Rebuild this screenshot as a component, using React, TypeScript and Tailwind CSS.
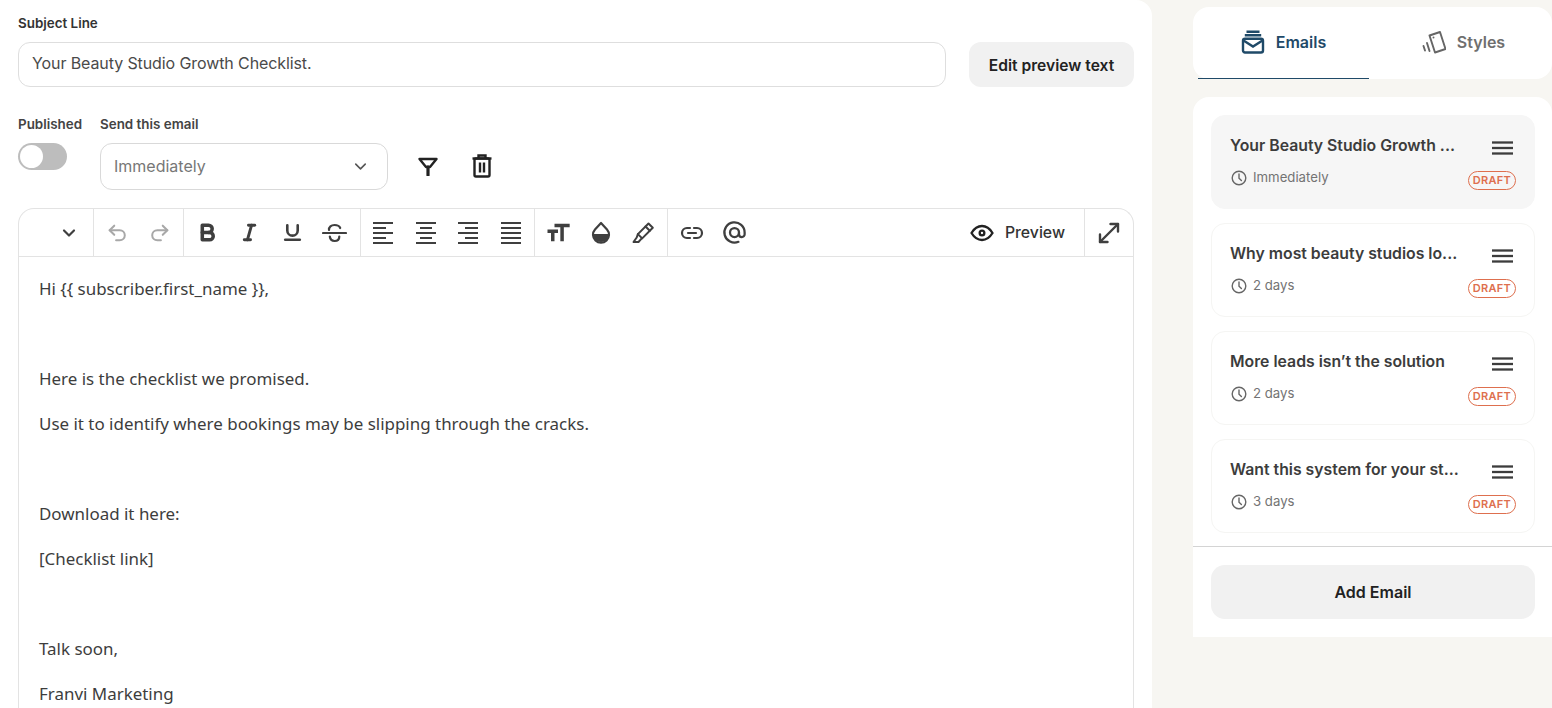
import { ChevronDown } from 'lucide-react'
import { TbAt, TbBold, TbEye, TbItalic, TbUnderline } from 'react-icons/tb'
import { MdFormatSize } from 'react-icons/md'

const inter = 'font-["Inter",sans-serif]'

function Lines({ rows }: { rows: [number, number][] }) {
  return (
    <svg width="22" height="22" viewBox="0 0 22 22" stroke="#3f3f3f" strokeWidth="2">
      {rows.map(([a, b], i) => (
        <line key={i} x1={a} x2={b} y1={1 + i * 5} y2={1 + i * 5} />
      ))}
    </svg>
  )
}

function ToolBtn({ children }: { children: React.ReactNode }) {
  return <div className="w-[42.5px] h-full flex items-center justify-center text-[#3f3f3f]">{children}</div>
}

function Group({ children, className = '' }: { children: React.ReactNode; className?: string }) {
  return <div className={`h-full flex items-center justify-center border-r border-[#e3e3e3] ${className}`}>{children}</div>
}

function Toolbar() {
  return (
    <div className="h-12 flex items-center border-b border-[#e3e3e3]">
      <Group className="w-[75px] pr-[2px]">
        <ChevronDown size={20} strokeWidth={2.6} className="ml-[27px] text-[#3f3f3f]" />
      </Group>
      <Group className="w-[90px]">
        <ToolBtn>
          <svg width="22" height="22" viewBox="0 0 24 24" fill="none" stroke="#a8a8a8" strokeWidth="2.200" strokeLinecap="round" strokeLinejoin="round">
            <path d="M9 14 4 9l5-5" />
            <path d="M4 9h11a5.5 5.5 0 0 1 0 11h-4" />
          </svg>
        </ToolBtn>
        <ToolBtn>
          <svg width="22" height="22" viewBox="0 0 24 24" fill="none" stroke="#a8a8a8" strokeWidth="2.200" strokeLinecap="round" strokeLinejoin="round">
            <path d="m15 14 5-5-5-5" />
            <path d="M20 9H9a5.5 5.5 0 0 0 0 11h4" />
          </svg>
        </ToolBtn>
      </Group>
      <Group className="w-[177px] pr-[2px]">
        <ToolBtn><TbBold size={25} strokeWidth={3.4} /></ToolBtn>
        <ToolBtn><TbItalic size={25} strokeWidth={2.8} /></ToolBtn>
        <ToolBtn><TbUnderline size={25} strokeWidth={2.5} /></ToolBtn>
        <ToolBtn>
          <svg width="25" height="24" viewBox="0 0 25 24" fill="none" stroke="#3f3f3f" strokeWidth="2.200" strokeLinecap="round">
            <path d="M1 12h23" />
            <path d="M7 9c-.2-3.200 2.200-5 5.500-5s5 1.200 5.700 3" />
            <path d="M7.800 15.500c.4 3 2.200 4.500 4.800 4.500s4.700-1.500 4.700-4.500" />
          </svg>
        </ToolBtn>
      </Group>
      <Group className="w-[174px] pr-[1px]">
        <ToolBtn><Lines rows={[[1, 21], [1, 14], [1, 21], [1, 14], [1, 21]]} /></ToolBtn>
        <ToolBtn><Lines rows={[[1, 21], [5, 17], [1, 21], [5, 17], [1, 21]]} /></ToolBtn>
        <ToolBtn><Lines rows={[[1, 21], [8, 21], [1, 21], [8, 21], [1, 21]]} /></ToolBtn>
        <ToolBtn><Lines rows={[[1, 21], [1, 21], [1, 21], [1, 21], [1, 21]]} /></ToolBtn>
      </Group>
      <Group className="w-[133px] pr-[1px]">
        <ToolBtn><MdFormatSize size={28} /></ToolBtn>
        <ToolBtn>
          <svg width="22" height="24" viewBox="0 0 22 24" fill="none">
            <path d="M11 2 5 8.400a8 8 0 1 0 12 0Z" stroke="#3f3f3f" strokeWidth="2.200" strokeLinejoin="round" />
            <path d="M3 13h16a8 8 0 0 1-16 0Z" fill="#3f3f3f" />
          </svg>
        </ToolBtn>
        <ToolBtn>
          <svg width="24" height="24" viewBox="0 0 24 24" fill="none" stroke="#3f3f3f" strokeWidth="2" strokeLinejoin="round" strokeLinecap="round">
            <path d="m17.500 2.500 4.300 4.300-10.600 10.600-4.300-4.300Z" />
            <path d="m14.500 5.500 4.300 4.300" />
            <path d="m6.900 13.100-1.200 3.400-3.200 4.500h5l3-3.300" />
          </svg>
        </ToolBtn>
      </Group>
      <div className="h-full flex items-center pl-[3px]">
        <ToolBtn>
          <svg width="24" height="24" viewBox="0 0 24 24" fill="none" stroke="#3f3f3f" strokeWidth="2.200" strokeLinecap="round">
            <path d="M10 7H7a5 5 0 0 0 0 10h3" />
            <path d="M14 7h3a5 5 0 0 1 0 10h-3" />
            <path d="M8 12h8" />
          </svg>
        </ToolBtn>
        <ToolBtn><TbAt size={27} strokeWidth={2} /></ToolBtn>
      </div>
      <div className="ml-auto h-full flex items-center gap-[9px] pr-[19px] border-r border-[#e3e3e3]">
        <TbEye size={28} strokeWidth={2} className="text-[#222]" />
        <span className={`${inter} text-[15.800px] font-medium text-[#333]`}>Preview</span>
      </div>
      <div className="w-[48px] h-full flex items-center justify-center text-[#3f3f3f]">
        <svg width="24" height="24" viewBox="0 0 24 24" fill="none" stroke="#3f3f3f" strokeWidth="2.400" strokeLinecap="round" strokeLinejoin="round">
          <path d="M3 21 21 3" />
          <path d="M13.500 3H21v7.500" />
          <path d="M3 13.500V21h7.500" />
        </svg>
      </div>
    </div>
  )
}

const bodyLines = [
  'Hi {{ subscriber.first_name }},',
  '',
  'Here is the checklist we promised.',
  'Use it to identify where bookings may be slipping through the cracks.',
  '',
  'Download it here:',
  '[Checklist link]',
  '',
  'Talk soon,',
  'Franvi Marketing',
]

function EmailCard({ title, time, active }: { title: string; time: string; active?: boolean }) {
  return (
    <div className={`h-[94px] rounded-[14px] border pl-[18px] pr-[18px] pt-[20px] ${active ? 'bg-[#f6f6f6] border-[#f6f6f6]' : 'bg-white border-[#f5f5f3]'}`}>
      <div className="flex items-start justify-between h-5">
        <span className={`${inter} text-[15.800px] leading-5 font-semibold text-[#3c3c3c] whitespace-nowrap`}>{title}</span>
        <svg width="21" height="14" viewBox="0 0 21 14" stroke="#3c3c3c" strokeWidth="2.300" className="mt-[5px] mr-[3px] shrink-0">
          <line x1="0" x2="21" y1="1.500" y2="1.500" />
          <line x1="0" x2="21" y1="7" y2="7" />
          <line x1="0" x2="21" y1="12.500" y2="12.500" />
        </svg>
      </div>
      <div className="flex items-center justify-between mt-[15px]">
        <div className="flex items-center gap-[6px] -mt-[5px] ml-px">
          <svg width="16" height="16" viewBox="0 0 16 16" fill="none" stroke="#666" strokeWidth="1.400" strokeLinecap="round">
            <circle cx="8" cy="8" r="6.800" />
            <path d="M8 4v4.200l2.400 2.400" />
          </svg>
          <span className={`${inter} text-[13.200px] text-[#737373]`}>{time}</span>
        </div>
        <span className={`${inter} h-[19px] w-[48px] flex items-center justify-center rounded-full border border-[#de6f4e] text-[11px] font-semibold tracking-[0.3px] text-[#de6f4e]`}>DRAFT</span>
      </div>
    </div>
  )
}

export default function App() {
  return (
    <div className="h-[708px] overflow-hidden bg-[#f7f6f2] flex">
      {/* Editor side */}
      <div className="w-[1152px] h-full overflow-hidden bg-white rounded-tr-2xl pl-[18px] pr-[18px] pt-[15px]">
        <label className={`${inter} block text-[13.400px] leading-4 font-semibold text-[#333]`}>Subject Line</label>
        <div className="flex gap-[23px] mt-[11px]">
          <div className={`${inter} w-[928px] h-[45px] flex items-center pl-[13px] pb-[3px] rounded-xl border border-[#dedede] text-[16px] tracking-[-0.1px] text-[#4a4a4a]`}>
            Your Beauty Studio Growth Checklist.
          </div>
          <button className={`${inter} flex-1 h-[45px] pt-[2px] rounded-xl bg-[#f1f1f1] text-[15.600px] font-semibold text-[#222]`}>
            Edit preview text
          </button>
        </div>

        <div className="flex mt-[29px] h-[92px]">
          <div className="w-[82px]">
            <div className={`${inter} text-[13.400px] leading-4 font-semibold text-[#444]`}>Published</div>
            <div className="mt-[11px] w-[49px] h-[27px] rounded-full bg-[#bdbdbd] p-[2px]">
              <div className="w-[23px] h-[23px] rounded-full bg-white" />
            </div>
          </div>
          <div>
            <div className={`${inter} text-[13.400px] leading-4 font-semibold text-[#444]`}>Send this email</div>
            <div className="flex items-center mt-[11px]">
              <div className={`${inter} w-[288px] h-[47px] pb-[1px] flex items-center justify-between pl-[13px] pr-[17px] rounded-xl border border-[#d9d9d9] text-[16px] text-[#777]`}>
                Immediately
                <ChevronDown size={19} strokeWidth={2} className="text-[#555]" />
              </div>
              <svg width="22" height="22" viewBox="0 0 22 22" fill="#222" stroke="#222" strokeWidth="2.400" strokeLinejoin="round" className="ml-[29px]">
                <path d="M2.500 3h17l-6.500 8-1 0-2 0-1 0Z" fill="none" />
                <path d="M10 10h2v9.500h-2Z" strokeWidth="1.200" />
              </svg>
              <svg width="22" height="24" viewBox="0 0 22 24" fill="none" stroke="#222" strokeWidth="2.400" className="ml-[32px] -mt-[1px]">
                <path d="M1.500 4.500h19" />
                <path d="M7.500 4V1.500h7V4" />
                <rect x="3.500" y="4.500" width="15" height="18" rx="1.500" />
                <path d="M9 8.500v10M13 8.500v10" />
              </svg>
            </div>
          </div>
        </div>

        <div className="rounded-t-2xl border border-[#e3e3e3] border-b-0 h-[600px]">
          <Toolbar />
          <div className={`font-["Noto_Sans",sans-serif] pl-5 pt-[9px] text-[16.950px] leading-[45px] text-[#3d3d3d]`}>
            {bodyLines.map((line, i) => (
              <div key={i} className="h-[45px]">{line}</div>
            ))}
          </div>
        </div>
      </div>

      {/* Sidebar */}
      <div className="ml-[41px] flex-1 pt-[7px]">
        <div className="h-[72px] bg-white rounded-2xl flex pl-[5px]">
          <div className="w-[171px] flex items-center justify-center gap-[11px] border-b border-[#1f4a68] pb-[2px]">
            <svg width="24" height="24" viewBox="0 0 24 24" fill="none" stroke="#1f4a68" strokeWidth="2.400">
              <path d="M5.500 1.800h13M3.800 5.200h16.400" />
              <rect x="2" y="8.700" width="20" height="13.800" rx="2" />
              <path d="m2.500 10.500 9.500 6 9.500-6" />
            </svg>
            <span className={`${inter} text-[16px] font-semibold text-[#1f4a68]`}>Emails</span>
          </div>
          <div className="flex-1 flex items-center justify-center gap-[11px] pb-[2px] pl-[6px]">
            <svg width="24" height="24" viewBox="0 0 24 24" fill="none" stroke="#666" strokeWidth="1.900" strokeLinejoin="round" strokeLinecap="round">
              <path d="m7.500 5.500 10.500-3.500 5.500 17-10.500 3.500Z" />
              <path d="M11.500 7.500h.01" />
              <path d="M5 13l2.500 8M1.500 16l1.500 4.500" />
            </svg>
            <span className={`${inter} text-[16px] font-semibold text-[#6f6f6f]`}>Styles</span>
          </div>
        </div>

        <div className="mt-[18px] bg-white rounded-t-2xl h-[540px]">
          <div className="pl-[18px] pt-[18px] pr-[17px] flex flex-col gap-[14px] h-[450px] border-b border-[#d4d4d4]">
            <EmailCard title="Your Beauty Studio Growth ..." time="Immediately" active />
            <EmailCard title="Why most beauty studios lo..." time="2 days" />
            <EmailCard title="More leads isn’t the solution" time="2 days" />
            <EmailCard title="Want this system for your st..." time="3 days" />
          </div>
          <div className="pl-[18px] pr-[17px] pt-[18px]">
            <button className={`${inter} w-full h-[54px] rounded-[14px] bg-[#f1f1f1] text-[16px] font-semibold text-[#222]`}>
              Add Email
            </button>
          </div>
        </div>
      </div>
    </div>
  )
}
